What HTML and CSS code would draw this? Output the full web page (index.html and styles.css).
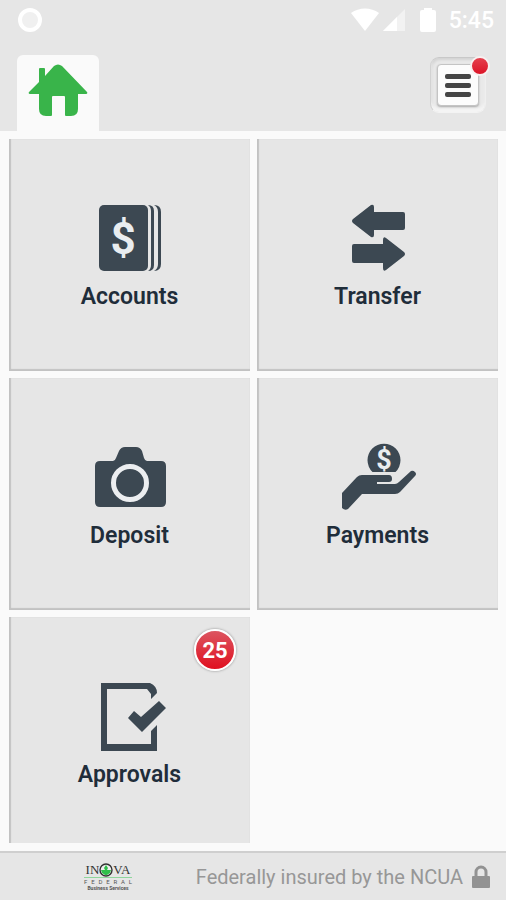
FILE: index.html
```html
<!DOCTYPE html>
<html lang="en">
<head>
<meta charset="utf-8">
<meta name="viewport" content="width=device-width, initial-scale=1">
<title>Mobile Banking</title>
<link rel="stylesheet" href="styles.css">
</head>
<body>
<header class="header">
  <div class="status">
    <span class="status-ring"></span>
    <div class="status-icons">
      <svg width="28" height="24" viewBox="0 0 28 24" aria-hidden="true"><path fill="#fff" d="M0 5C8-1 20-1 28 5L14 23Z"/></svg>
      <svg width="24" height="24" viewBox="0 0 24 24" aria-hidden="true"><path fill="#f2f2f2" d="M0 23L22 1V23Z"/><path fill="#fff" d="M0 23L14 9V23Z"/></svg>
      <svg class="battery" width="18" height="24" viewBox="0 0 18 24" aria-hidden="true"><path fill="#fff" d="M5 0H13V2H15Q17 2 17 4V22Q17 24 15 24H3Q1 24 1 22V4Q1 2 3 2H5Z"/></svg>
      <span class="clock">5:45</span>
    </div>
  </div>
  <nav class="tabs">
    <a class="tab" href="#" aria-label="Home">
      <svg width="60" height="52" viewBox="0 0 60 52" aria-hidden="true"><path fill="#39b44a" d="M1 28L11 18V5Q11 4 12 4H16Q17 4 17 5V12L26 2Q30-1 34 2L59 28Q60 30 58 30H50V45Q50 52 43 52H38Q37 52 37 51V33Q37 32 36 32H25Q24 32 24 33V51Q24 52 23 52H18Q11 52 11 45V30H2Q0 30 1 28Z"/></svg>
    </a>
    <button class="menu" type="button" aria-label="Menu">
      <span class="menu-face"><i></i><i></i><i></i></span>
      <span class="menu-dot"></span>
    </button>
  </nav>
</header>
<main class="main">
  <div class="tiles">
    <a class="tile" href="#">
      <svg class="icon" viewBox="0 0 80 74" aria-hidden="true">
        <rect x="9" y="4" width="49" height="66" rx="5"/>
        <path d="M58 4Q64 4 64 10V64Q64 70 58 70Q61 68 61 64V10Q61 6 58 4ZM64 4Q71 4 71 11V63Q71 70 64 70Q68 68 68 63V11Q68 6 64 4Z"/>
        <text class="dollar" x="33" y="53" font-size="44">$</text>
      </svg>
      <span class="label">Accounts</span>
    </a>
    <a class="tile" href="#">
      <svg class="icon" viewBox="0 0 80 74" aria-hidden="true">
        <path d="M15 18L33 4Q36 3 36 6V11H65Q67 11 67 13V27Q67 29 65 29H36V34Q36 37 33 36L15 22Q13 20 15 18Z"/>
        <path d="M66 51L48 37Q45 35 45 39V43H16Q14 43 14 45V60Q14 62 16 62H45V67Q45 71 48 69L66 55Q68 53 66 51Z"/>
      </svg>
      <span class="label">Transfer</span>
    </a>
    <a class="tile" href="#">
      <svg class="icon" viewBox="0 0 80 74" aria-hidden="true">
        <path d="M10 21H23Q25 21 26 18L29 11Q31 7 35 7H46Q50 7 52 11L54 18Q55 21 57 21H71Q76 21 76 26V62Q76 67 71 67H10Q5 67 5 62V26Q5 21 10 21Z"/>
        <circle class="lens" cx="40" cy="43" r="16.5"/>
      </svg>
      <span class="label">Deposit</span>
    </a>
    <a class="tile" href="#">
      <svg class="icon" viewBox="0 0 80 74" aria-hidden="true">
        <path d="M34.5 32A16.5 16.5 0 1 1 57.5 32Z"/>
        <text class="dollar" x="46" y="29" font-size="27">$</text>
        <path d="M4 53L19 37Q21 35 24 35H51Q54 35 54 39Q54 42 51 42H39V44H57Q59 44 61 42L73 31Q75 30 77 32Q79 34 77 36L62 52Q60 54 57 54H24L10 69Q7 71 4 68Z"/>
      </svg>
      <span class="label">Payments</span>
    </a>
    <a class="tile" href="#">
      <svg class="icon" viewBox="0 0 80 74" aria-hidden="true">
        <path d="M11 4H60Q67 7 67 14L61 20V15L57 10H17V65H61V52L67 46V72H11Z"/>
        <path d="M38 39L44 32L51 38L69 22L76 29L52 53Z"/>
      </svg>
      <span class="label">Approvals</span>
      <span class="badge">25</span>
    </a>
  </div>
</main>
<footer class="footer">
  <div class="brand">
    <div class="brand-name"><span>IN</span><svg width="14" height="14" viewBox="0 0 14 14" aria-hidden="true"><ellipse cx="7" cy="7" rx="6" ry="6" fill="#eee" stroke="#333" stroke-width="1.4"/><path fill="#2fc04a" d="M7 2L9 5L8 7L12 7L11 10L8 12H6L3 10L2 7L6 7L5 5Z"/></svg><span>VA</span></div>
    <div class="brand-sub"><span>F</span><span>E</span><span>D</span><span>E</span><span>R</span><span>A</span><span>L</span></div>
    <div class="brand-line">Business Services</div>
  </div>
  <div class="insured">
    <span>Federally insured by the NCUA</span>
    <svg width="18" height="24" viewBox="0 0 18 24" aria-hidden="true"><path fill="none" stroke="#929292" stroke-width="3" d="M4 12V7A5 5 0 0 1 14 7V12"/><rect x="0" y="11" width="18" height="12" rx="1" fill="#929292"/></svg>
  </div>
</footer>
</body>
</html>
```
FILE: styles.css
```css
* {
  box-sizing: border-box;
}

body {
  margin: 0;
  height: 100vh;
  display: flex;
  flex-direction: column;
  background: #fafafa;
  font-family: Roboto, "Liberation Sans", sans-serif;
  color: #1f2d3a;
}

a {
  color: inherit;
  text-decoration: none;
}

svg {
  display: block;
}

.header {
  background: #e6e6e6;
}

.status {
  display: flex;
  justify-content: space-between;
  align-items: center;
  height: 40px;
  padding: 0 12px 0 18px;
}

.status-ring {
  width: 24px;
  height: 24px;
  border: 4px solid #fff;
  border-radius: 50%;
  background: #f0f0f0;
}

.status-icons {
  display: flex;
  align-items: center;
  gap: 4px;
}

.battery {
  margin-left: 8px;
}

.clock {
  margin-left: 8px;
  padding-top: 2px;
  font-size: 23px;
  line-height: 28px;
  font-weight: 500;
  color: #fff;
}

.tabs {
  display: flex;
  justify-content: space-between;
  padding: 15px 20px 0 17px;
}

.tab {
  display: flex;
  justify-content: center;
  width: 82px;
  height: 76px;
  padding-top: 9px;
  border-radius: 6px 6px 0 0;
  background: #fafafa;
}

.menu {
  position: relative;
  width: 56px;
  height: 56px;
  margin-top: 2px;
  padding: 6px;
  border: 1px solid;
  border-color: #c8c8c8 #efefef #f3f3f3 #d2d2d2;
  border-radius: 9px;
  background: #e9e9e9;
  box-shadow: inset 0 -4px 3px #f4f4f4, inset 1px 2px 3px #d2d2d2;
}

.menu-face {
  display: flex;
  flex-direction: column;
  align-items: center;
  justify-content: center;
  gap: 4px;
  height: 42px;
  border: 1px solid #c4c4c4;
  border-radius: 4px;
  background: #fcfcfc;
  box-shadow: 0 1px 2px #aaa;
}

.menu-face i {
  width: 26px;
  height: 5px;
  border-radius: 2px;
  background: #454545;
}

.menu-dot {
  position: absolute;
  top: -2px;
  right: -5px;
  width: 20px;
  height: 20px;
  border: 2px solid #f8f0f0;
  border-radius: 50%;
  background: linear-gradient(#e5404d, #dc1427);
}

.main {
  flex: 1;
  min-height: 0;
  padding: 8px 8px 8px 9px;
}

.tiles {
  display: grid;
  grid-template-columns: 1fr 1fr;
  grid-auto-rows: 232px;
  gap: 7px;
  height: 100%;
  overflow: hidden;
}

.tile {
  position: relative;
  display: flex;
  flex-direction: column;
  align-items: center;
  gap: 8px;
  padding-top: 62px;
  background: #e6e6e6;
  box-shadow: inset 2px 0 1px #c2c2c2, inset 0 -2px 1px #c2c2c2;
}

.icon {
  width: 80px;
  height: 74px;
  fill: #3c4852;
}

.dollar {
  fill: #e9edf0;
  font-weight: 700;
  text-anchor: middle;
}

.lens {
  fill: none;
  stroke: #eceef0;
  stroke-width: 5;
}

.label {
  font-size: 23px;
  line-height: 28px;
  font-weight: 600;
}

.badge {
  position: absolute;
  top: 12px;
  right: 14px;
  width: 42px;
  height: 42px;
  border: 2px solid #fff;
  border-radius: 50%;
  background: linear-gradient(#dc5560, #e01020);
  box-shadow: 0 0 2px 1px #bbb;
  color: #fff;
  font-size: 22px;
  line-height: 40px;
  font-weight: 700;
  text-align: center;
}

.footer {
  display: flex;
  align-items: center;
  justify-content: space-between;
  height: 49px;
  padding: 0 16px 0 84px;
  border-top: 2px solid #cfcfcf;
  background: #e6e6e6;
}

.brand {
  width: 48px;
  color: #555;
}

.brand-name {
  display: flex;
  align-items: center;
  justify-content: center;
  height: 15px;
  border-bottom: 1px solid #8fd69c;
  font-family: "Liberation Serif", serif;
  font-size: 13px;
  line-height: 14px;
  color: #333;
}

.brand-sub {
  display: flex;
  justify-content: space-between;
  font-size: 6px;
  line-height: 8px;
}

.brand-line {
  font-size: 5px;
  line-height: 5px;
  font-weight: 700;
  text-align: center;
  white-space: nowrap;
}

.insured {
  display: flex;
  align-items: center;
  gap: 9px;
  font-size: 20px;
  line-height: 24px;
  color: #979797;
}
```
